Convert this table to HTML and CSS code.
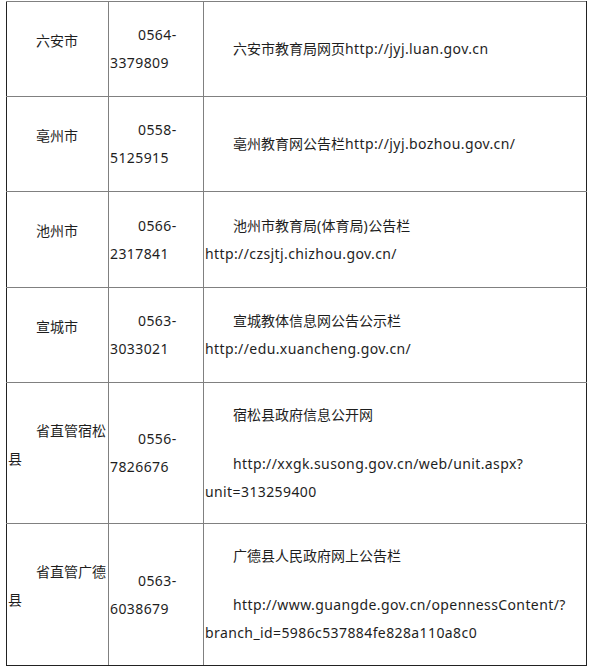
FILE: index.html
```html
<!DOCTYPE html>
<html lang="zh-CN">
<head>
<meta charset="utf-8">
<title>教育局公告栏</title>
<link rel="stylesheet" href="styles.css">
</head>
<body>
<div class="wrap">
<table class="list">
  <colgroup>
    <col class="c1"><col class="c2"><col class="c3">
  </colgroup>
  <tbody>
    <tr class="h95">
      <td class="city"><p>六安市</p></td>
      <td class="tel"><p><span class="en">0564-</span><br><span class="en">3379809</span></p></td>
      <td class="site"><p>六安市教育局网页<span class="en">http://jyj.luan.gov.cn</span></p></td>
    </tr>
    <tr class="h95">
      <td class="city"><p>亳州市</p></td>
      <td class="tel"><p><span class="en">0558-</span><br><span class="en">5125915</span></p></td>
      <td class="site"><p>亳州教育网公告栏<span class="en">http://jyj.bozhou.gov.cn/</span></p></td>
    </tr>
    <tr class="h96">
      <td class="city"><p>池州市</p></td>
      <td class="tel"><p><span class="en">0566-</span><br><span class="en">2317841</span></p></td>
      <td class="site"><p>池州市教育局<span class="en">(</span>体育局<span class="en">)</span>公告栏<br><span class="en">http://czsjtj.chizhou.gov.cn/</span></p></td>
    </tr>
    <tr class="h95">
      <td class="city"><p>宣城市</p></td>
      <td class="tel"><p><span class="en">0563-</span><br><span class="en">3033021</span></p></td>
      <td class="site"><p>宣城教体信息网公告公示栏<br><span class="en">http://edu.xuancheng.gov.cn/</span></p></td>
    </tr>
    <tr class="h141">
      <td class="city"><p>省直管宿松<br>县</p></td>
      <td class="tel"><p><span class="en">0556-</span><br><span class="en">7826676</span></p></td>
      <td class="site"><p>宿松县政府信息公开网</p><p class="gap"><span class="en">http://xxgk.susong.gov.cn/web/unit.aspx?</span><br><span class="en">unit=313259400</span></p></td>
    </tr>
    <tr class="h142 last">
      <td class="city"><p>省直管广德<br>县</p></td>
      <td class="tel"><p><span class="en">0563-</span><br><span class="en">6038679</span></p></td>
      <td class="site"><p>广德县人民政府网上公告栏</p><p class="gap"><span class="en">http://www.guangde.gov.cn/opennessContent/?</span><br><span class="en">branch_id=5986c537884fe828a110a8c0</span></p></td>
    </tr>
  </tbody>
</table>
</div>
</body>
</html>
```

FILE: styles.css
```css
html, body {
  margin: 0;
  padding: 0;
  background: #ffffff;
}

body {
  font-family: "Noto Sans", "Noto Sans CJK SC", sans-serif;
  font-size: 14px;
  line-height: 28px;
  color: #1e1e1e;
}

.wrap {
  padding: 1px 0 0 6px;
}

.list {
  border-collapse: collapse;
  table-layout: fixed;
  width: 580px;
}

.c1 { width: 102px; }
.c2 { width: 95px; }
.c3 { width: 383px; }

.list td {
  border: 1px solid #808080;
  padding: 0 1px;
  vertical-align: middle;
  text-align: left;
}

.list td:first-child { border-left-color: #222222; }
.list td:last-child { border-right-color: #222222; }
.list tr.last td { border-bottom-color: #222222; }

.list p {
  margin: 0;
  text-indent: 28px;
  white-space: nowrap;
}

.en {
  letter-spacing: 0.4px;
}

.city p {
  padding-bottom: 17px;
}

.site p.gap {
  margin-top: 21px;
}

.h95 { height: 95px; }
.h96 { height: 96px; }
.h141 { height: 141px; }
.h142 { height: 142px; }
```
